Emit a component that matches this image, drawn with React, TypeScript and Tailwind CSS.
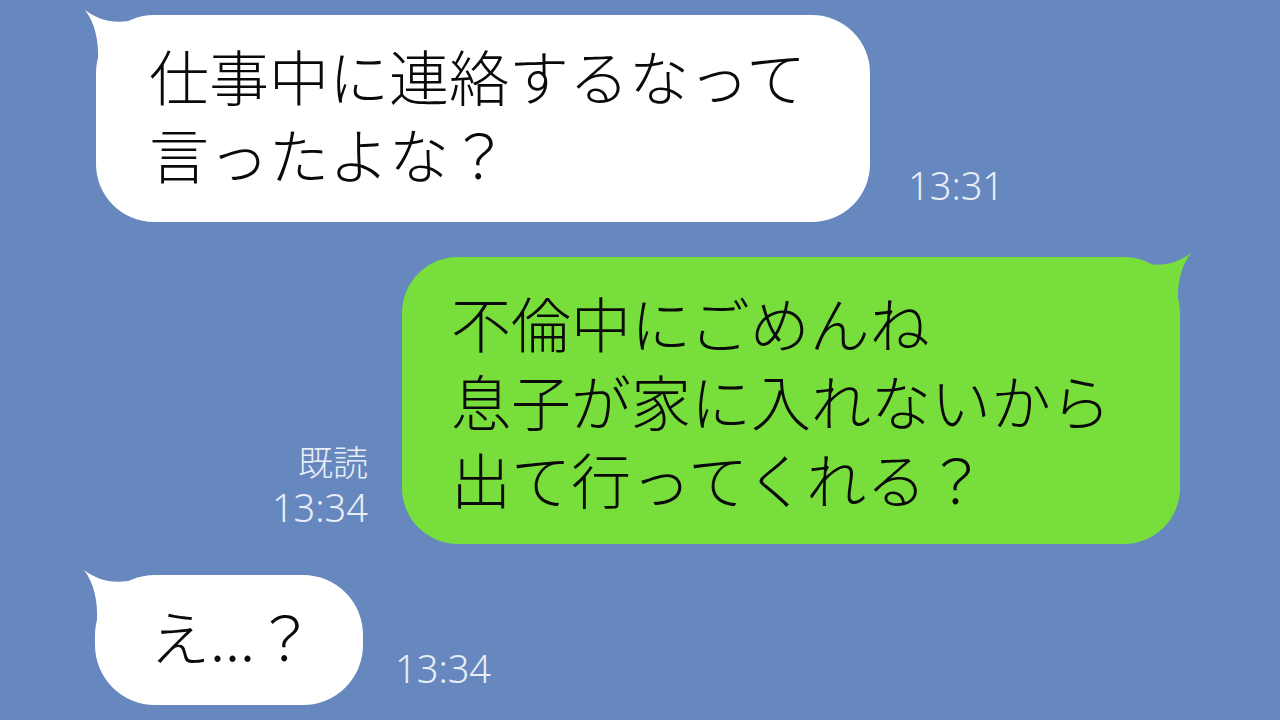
import React from "react";

const font = { fontFamily: '"Noto Sans CJK JP", "Noto Sans", sans-serif' };

function Tail({ color, side }: { color: string; side: "left" | "right" }) {
  return (
    <svg
      width="60"
      height="56"
      viewBox="0 0 60 56"
      className={
        side === "left"
          ? "absolute -left-[12px] -top-[6px]"
          : "absolute -right-[12px] -top-[5px] -scale-x-100"
      }
    >
      <path d="M1 1 C16 12 31 16 56 10 L56 52 L14 52 C15 32 11 14 1 1 Z" fill={color} />
    </svg>
  );
}

function Time({ children, className = "" }: { children: React.ReactNode; className?: string }) {
  return (
    <div
      className={"text-[38px] leading-[46px] font-light text-[#e9eef7] " + className}
      style={{ fontFamily: '"Noto Sans", "Noto Sans CJK JP", sans-serif' }}
    >
      {children}
    </div>
  );
}

function Lines({ lines }: { lines: string[] }) {
  return (
    <div className="relative text-[60px] leading-[78px] font-light text-[#0a0a0a] whitespace-nowrap">
      {lines.map((l) => (
        <div key={l}>{l}</div>
      ))}
    </div>
  );
}

export default function App() {
  return (
    <div
      className="w-[1280px] h-[720px] bg-[#6787bf] overflow-hidden flex flex-col pt-[15px]"
      style={font}
    >
      {/* incoming */}
      <div className="flex items-end pl-[96px]">
        <div className="relative w-[774px] bg-white rounded-[58px] pl-[53px] pt-[21px] pb-[30px]">
          <Tail color="#ffffff" side="left" />
          <Lines lines={["仕事中に連絡するなって", "言ったよな？"]} />
        </div>
        <Time className="ml-[38px] mb-[14px]">13:31</Time>
      </div>

      {/* outgoing */}
      <div className="flex items-end justify-end pr-[100px] mt-[35px]">
        <div className="flex flex-col items-end mr-[34px] mb-[14px]">
          <div className="text-[35px] leading-[46px] font-light text-[#e9eef7]">既読</div>
          <Time>13:34</Time>
        </div>
        <div className="relative w-[778px] bg-[#78de3c] rounded-[56px] pl-[49px] pt-[26px] pb-[27px]">
          <Tail color="#78de3c" side="right" />
          <Lines lines={["不倫中にごめんね", "息子が家に入れないから", "出て行ってくれる？"]} />
        </div>
      </div>

      {/* incoming */}
      <div className="flex items-end pl-[95px] mt-[31px]">
        <div className="relative w-[268px] bg-white rounded-[60px] pl-[55px] pt-[21px] pb-[31px]">
          <Tail color="#ffffff" side="left" />
          <Lines lines={["え...？"]} />
        </div>
        <Time className="ml-[32px] mb-[14px]">13:34</Time>
      </div>
    </div>
  );
}
